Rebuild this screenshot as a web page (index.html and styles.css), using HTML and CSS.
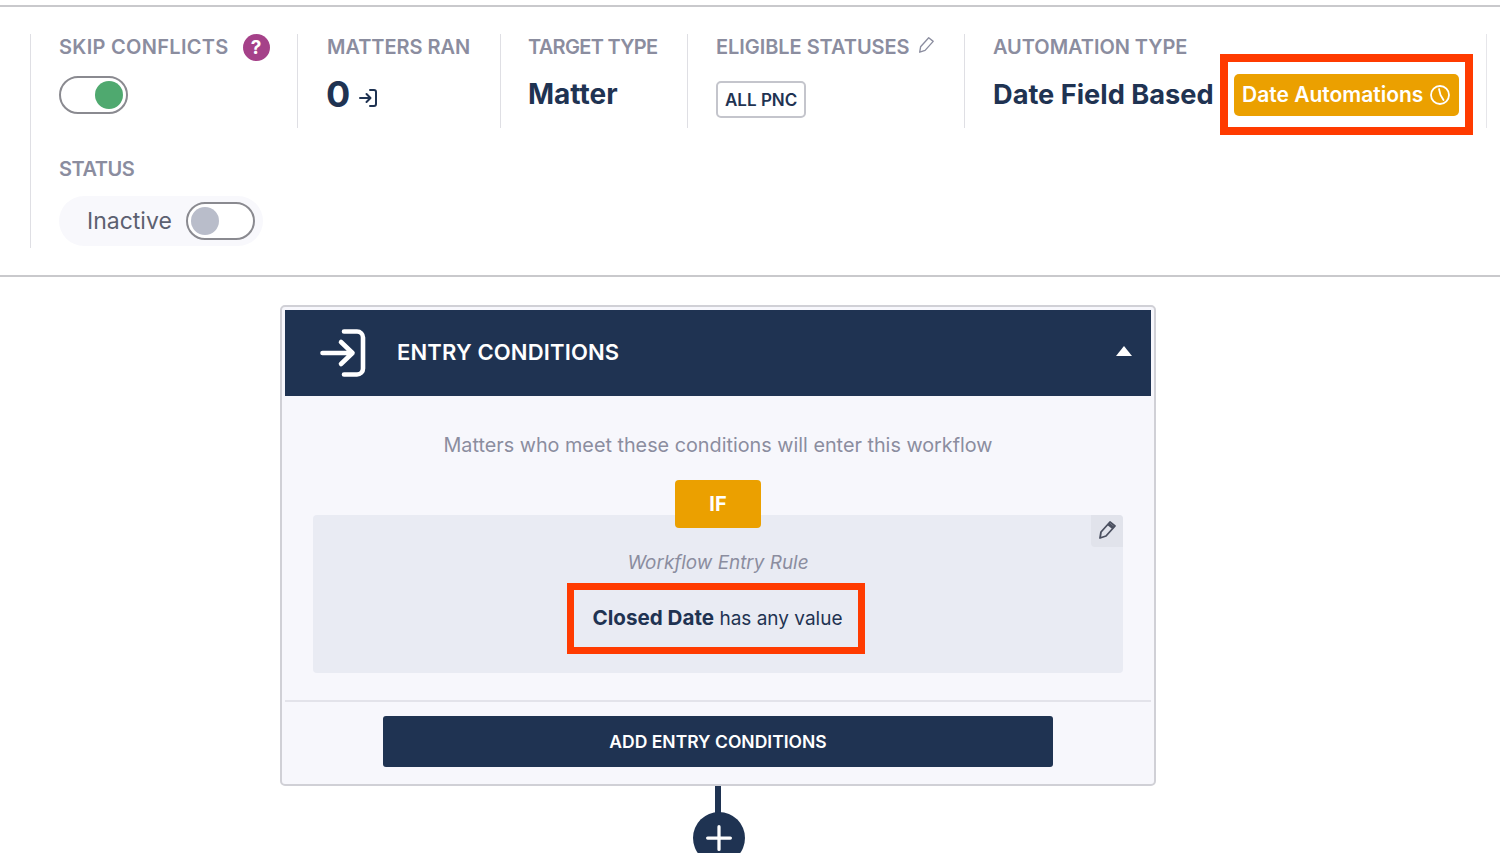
FILE: index.html
```html
<!DOCTYPE html>
<html lang="en">
<head>
    <meta charset="UTF-8">
    <title>Workflow</title>
    <link rel="stylesheet" href="styles.css">
</head>
<body>
    <section class="summary">
        <div class="stats-row">
            <div class="stat stat-skip">
                <div class="stat-label label-skip">SKIP CONFLICTS<span class="help">?</span></div>
                <div class="toggle toggle-on"><span class="knob"></span></div>
            </div>
            <div class="stat stat-ran">
                <div class="stat-label">MATTERS RAN</div>
                <div class="stat-value">0<svg class="enter-small" viewBox="0 0 20 20" fill="none" stroke="#1f3352" stroke-width="2" stroke-linecap="round" stroke-linejoin="round">
                        <path d="M2 10h10M8.500 6l4 4-4 4"/>
                        <path d="M12 2h4a2 2 0 0 1 2 2v12a2 2 0 0 1-2 2h-4"/>
                    </svg></div>
            </div>
            <div class="stat stat-target">
                <div class="stat-label label-target">TARGET TYPE</div>
                <div class="stat-value value-target">Matter</div>
            </div>
            <div class="stat stat-eligible">
                <div class="stat-label">ELIGIBLE STATUSES<svg class="pencil-small" viewBox="0 0 20 20" fill="none" stroke="#8b8d9f" stroke-width="1.500" stroke-linejoin="round">
                        <path d="M3 18l1-6L13 2l5 4-9 10z"/>
                    </svg></div>
                <span class="tag">ALL PNC</span>
            </div>
            <div class="stat stat-automation">
                <div>
                    <div class="stat-label">AUTOMATION TYPE</div>
                    <div class="stat-value">Date Field Based</div>
                </div>
                <div class="highlight highlight-button">
                    <button class="date-btn">Date Automations<svg viewBox="0 0 22 22" fill="none" stroke="#fff" stroke-width="1.800" stroke-linecap="round">
                            <circle cx="11" cy="11" r="9"/>
                            <path d="M10 5l1.500 6 3 5"/>
                        </svg></button>
                </div>
            </div>
        </div>
        <div class="stat stat-status">
            <div class="stat-label label-status">STATUS</div>
            <div class="status-pill">
                <span>Inactive</span>
                <div class="toggle toggle-off"><span class="knob"></span></div>
            </div>
        </div>
    </section>

    <section class="card">
        <div class="card-head">
            <svg class="enter-big" viewBox="0 0 46 48" fill="none" stroke="#fff" stroke-width="4.600" stroke-linecap="round" stroke-linejoin="round">
                <path d="M2.500 24h30M21 13l11.500 11L21 35"/>
                <path d="M24 2.500h13a6 6 0 0 1 6 6v31a6 6 0 0 1-6 6H24"/>
            </svg>
            <h2>ENTRY CONDITIONS</h2>
            <span class="caret"></span>
        </div>
        <div class="card-body">
            <p class="hint">Matters who meet these conditions will enter this workflow</p>
            <div class="if-badge">IF</div>
            <div class="rule">
                <button class="rule-edit">
                    <svg viewBox="0 0 20 20" fill="none" stroke="#4b5060" stroke-width="1.800" stroke-linejoin="round">
                        <path d="M3 18l1-6L13 2l5 4-9 10z"/>
                        <path d="M11.500 4l5 4" stroke-width="3"/>
                    </svg>
                </button>
                <div class="rule-title">Workflow Entry Rule</div>
                <div class="highlight highlight-rule"><strong>Closed Date</strong> has any value</div>
            </div>
        </div>
        <div class="card-foot">
            <button class="add-btn">ADD ENTRY CONDITIONS</button>
        </div>
    </section>

    <div class="connector"></div>
    <div class="add-circle">
        <svg viewBox="0 0 24 24" fill="none" stroke="#fff" stroke-width="3" stroke-linecap="round">
            <path d="M12 1.500v21M1.500 12h21"/>
        </svg>
    </div>
</body>
</html>
```

FILE: styles.css
```css
body {
    font-family: 'Inter', 'Liberation Sans', sans-serif;
    margin: 0;
    height: 853px;
    overflow: hidden;
    background-color: #fff;
    color: #1f3352;
}

.summary {
    box-sizing: border-box;
    height: 272px;
    margin-top: 5px;
    padding-top: 27px;
    padding-left: 30px;
    border-top: 2px solid #c9c9cc;
    border-bottom: 2px solid #c9c9cc;
}

.stats-row {
    display: flex;
    height: 94px;
    width: 1457px;
    border-right: 1px solid #e6e6ea;
    box-sizing: border-box;
}

.stat {
    box-sizing: border-box;
    padding-left: 28px;
    border-left: 1px solid #dfdfe4;
}

.stat-skip { width: 267px; }
.stat-ran { width: 203px; padding-left: 28px; }
.stat-target { width: 187px; padding-left: 27px; }
.stat-eligible { width: 277px; }

.stat-automation {
    flex: 1;
    display: flex;
}

.stat-status {
    height: 120px;
    padding-top: 28px;
}

.stat-label {
    display: flex;
    align-items: center;
    height: 26px;
    font-size: 20px;
    font-weight: 600;
    letter-spacing: -0.05px;
    color: #8b8d9f;
    white-space: nowrap;
}

.stat-ran .stat-label { padding-left: 1px; }
.label-skip { letter-spacing: 0.3px; }
.label-target { letter-spacing: -0.7px; }
.label-status { letter-spacing: -0.5px; }

.stat-value {
    display: flex;
    align-items: center;
    margin-top: 14px;
    height: 40px;
    font-size: 27.200px;
    font-weight: 700;
    white-space: nowrap;
}

.value-target {
    font-size: 28px;
}

.stat-ran .stat-value {
    font-size: 36px;
}

.help {
    display: inline-block;
    width: 27px;
    height: 27px;
    margin-left: 14px;
    border-radius: 50%;
    background-color: #a54189;
    color: #fff;
    font-size: 19px;
    font-weight: 700;
    line-height: 27px;
    letter-spacing: 0;
    text-align: center;
}

.toggle {
    box-sizing: border-box;
    display: flex;
    align-items: center;
    width: 69px;
    height: 38px;
    padding: 0 3px;
    border: 2px solid #8a8a90;
    border-radius: 19px;
    background-color: #fff;
}

.toggle-on {
    justify-content: flex-end;
    margin-top: 16px;
}

.knob {
    width: 28px;
    height: 28px;
    border-radius: 50%;
}

.toggle-on .knob { background-color: #4fa96f; }
.toggle-off .knob { background-color: #b9bdca; }

.enter-small {
    width: 20px;
    height: 20px;
    margin-left: 8px;
    margin-top: 7px;
}

.pencil-small {
    width: 18px;
    height: 18px;
    margin-left: 7px;
    margin-top: -5px;
}

.tag {
    display: inline-block;
    margin-top: 21px;
    padding: 0 7px;
    height: 37px;
    line-height: 35px;
    box-sizing: border-box;
    border: 2px solid #c4c5cc;
    border-radius: 5px;
    font-size: 17px;
    font-weight: 600;
    white-space: nowrap;
}

.highlight {
    box-sizing: border-box;
    border: 8px solid #ff3b00;
}

.highlight-button {
    display: flex;
    align-items: center;
    justify-content: center;
    width: 253px;
    height: 81px;
    margin: 20px 13px 0 auto;
    background-color: #fff;
}

.date-btn {
    display: flex;
    align-items: center;
    justify-content: space-between;
    box-sizing: border-box;
    width: 225px;
    height: 42px;
    padding: 0 8px;
    border: none;
    border-radius: 5px;
    background-color: #eba000;
    color: #fff;
    font-family: inherit;
    font-size: 21px;
    font-weight: 600;
    white-space: nowrap;
}

.date-btn svg {
    width: 22px;
    height: 22px;
}

.status-pill {
    display: flex;
    align-items: center;
    gap: 14px;
    width: 204px;
    height: 50px;
    box-sizing: border-box;
    margin-top: 14px;
    padding-left: 28px;
    border-radius: 25px;
    background-color: #f8f8fc;
    font-size: 23px;
    color: #5c6070;
}

.card {
    box-sizing: border-box;
    width: 876px;
    height: 481px;
    margin: 28px 0 0 280px;
    padding: 3px;
    border: 2px solid #d0d0d6;
    border-radius: 5px;
    background-color: #f7f7fc;
}

.card-head {
    display: flex;
    align-items: center;
    box-sizing: border-box;
    height: 86px;
    padding: 0 19px 2px 35px;
    background-color: #1f3352;
    color: #fff;
}

.enter-big {
    width: 46px;
    height: 48px;
    margin-bottom: -2px;
}

.card-head h2 {
    flex: 1;
    margin: 0 0 0 31px;
    font-size: 22px;
    font-weight: 600;
    letter-spacing: 0.15px;
}

.caret {
    width: 0;
    height: 0;
    margin-top: -3px;
    border-left: 8px solid transparent;
    border-right: 8px solid transparent;
    border-bottom: 10px solid #fff;
}

.card-body {
    display: flex;
    flex-direction: column;
    align-items: center;
    box-sizing: border-box;
    height: 306px;
    border-bottom: 2px solid #e3e3ea;
}

.hint {
    margin: 36px 0 0;
    height: 26px;
    line-height: 26px;
    font-size: 19.800px;
    color: #8b8d9f;
}

.if-badge {
    position: relative;
    z-index: 1;
    width: 86px;
    height: 48px;
    margin-top: 22px;
    margin-bottom: -13px;
    border-radius: 4px;
    background-color: #eba000;
    color: #fff;
    font-size: 20px;
    font-weight: 700;
    line-height: 48px;
    text-align: center;
}

.rule {
    position: relative;
    display: flex;
    flex-direction: column;
    align-items: center;
    box-sizing: border-box;
    width: 810px;
    height: 158px;
    border-radius: 4px;
    background-color: #e9ebf3;
}

.rule-edit {
    position: absolute;
    top: 0;
    right: 0;
    display: flex;
    align-items: center;
    justify-content: center;
    width: 32px;
    height: 32px;
    padding: 0 0 2px;
    border: none;
    border-radius: 0 4px 0 4px;
    background-color: #e1e3eb;
}

.rule-edit svg {
    width: 20px;
    height: 20px;
}

.rule-title {
    margin-top: 35px;
    height: 26px;
    line-height: 26px;
    font-size: 18.900px;
    font-style: italic;
    color: #8b8d9f;
}

.highlight-rule {
    width: 298px;
    height: 71px;
    margin-top: 7px;
    margin-right: 4px;
    padding-left: 3px;
    border-width: 7px;
    line-height: 55px;
    font-size: 19px;
    text-align: center;
    white-space: nowrap;
}

.highlight-rule strong {
    font-size: 20.600px;
    font-weight: 700;
}

.card-foot {
    display: flex;
    justify-content: center;
    padding-top: 14px;
}

.add-btn {
    width: 670px;
    height: 51px;
    border: none;
    border-radius: 3px;
    background-color: #1f3352;
    color: #fff;
    font-family: inherit;
    font-size: 17.500px;
    font-weight: 600;
}

.connector {
    width: 6px;
    height: 28px;
    margin-left: 715px;
    background-color: #1f3352;
}

.add-circle {
    display: flex;
    align-items: center;
    justify-content: center;
    width: 52px;
    height: 52px;
    margin: -2px 0 0 693px;
    border-radius: 50%;
    background-color: #1f3352;
}

.add-circle svg {
    width: 26px;
    height: 26px;
}
```
